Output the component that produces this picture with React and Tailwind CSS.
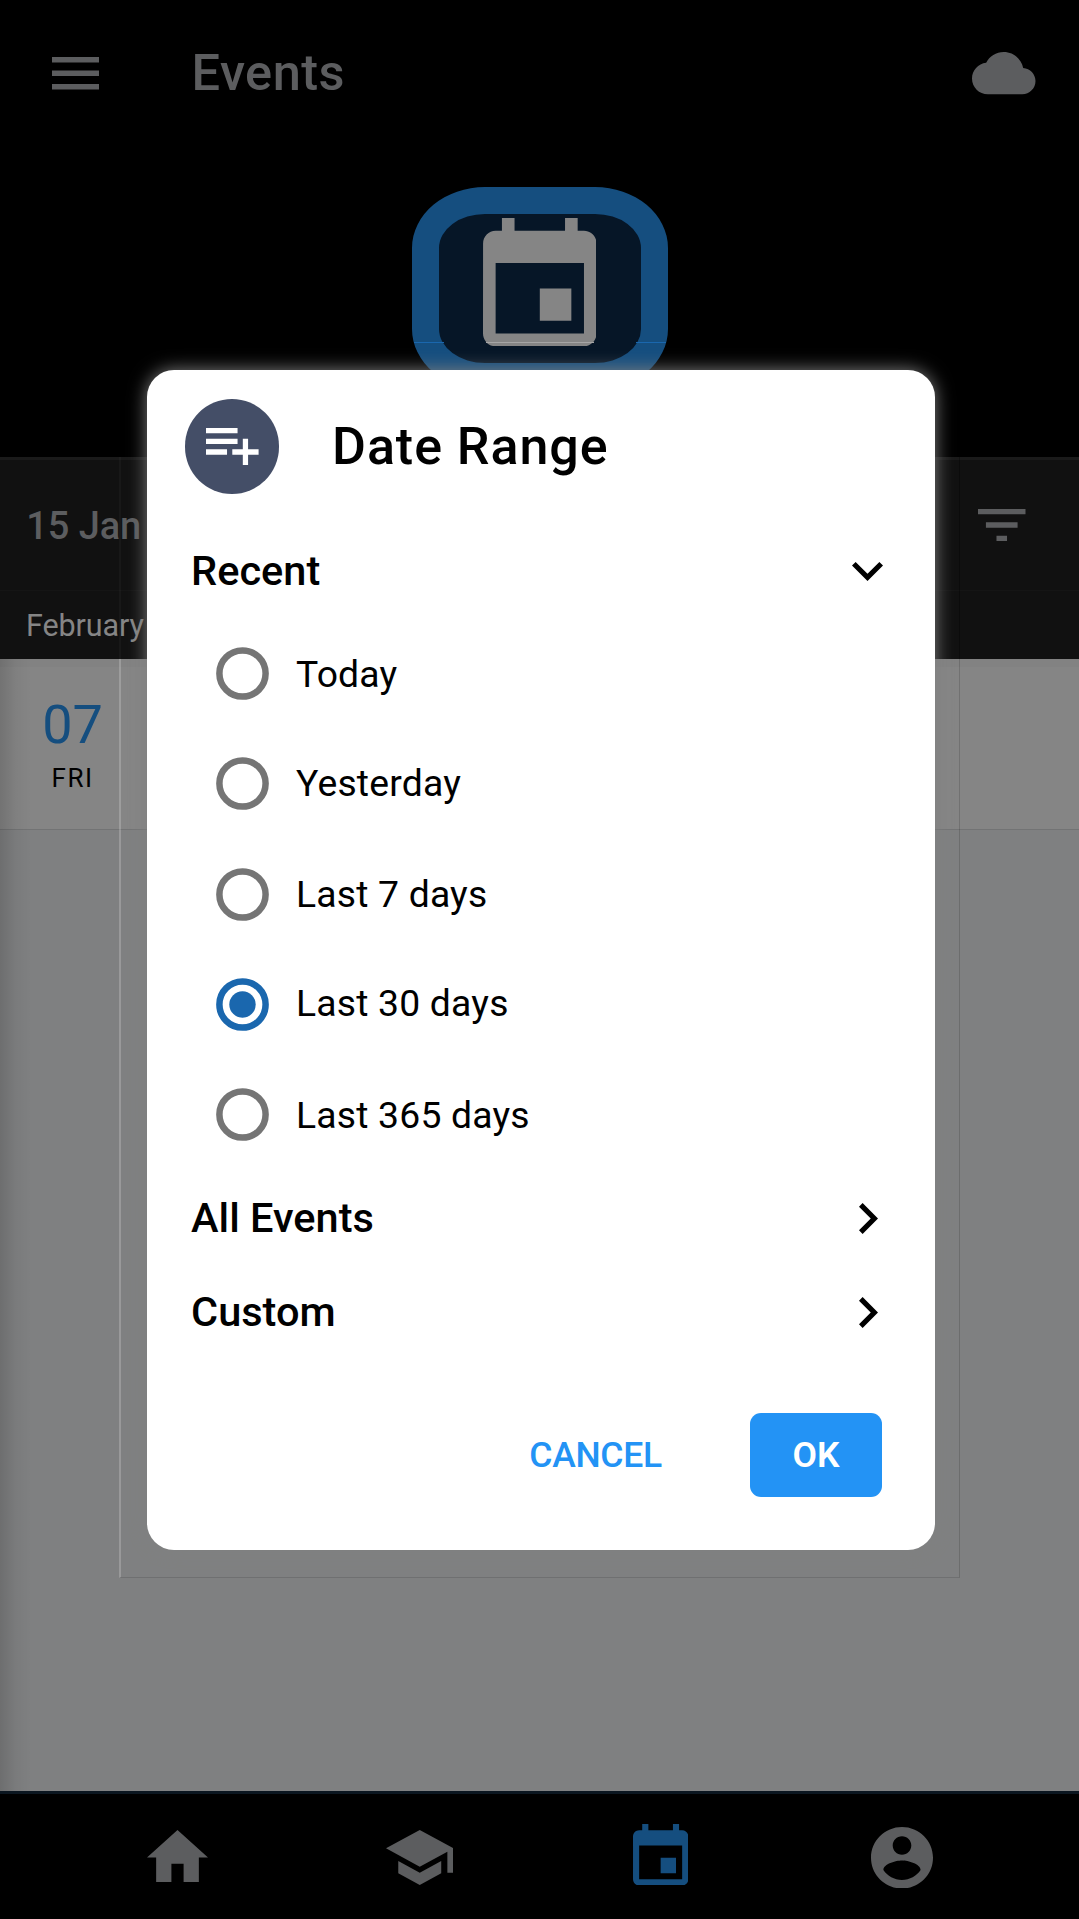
import React from "react";

function Shape({ box, d, className }) {
  return (
    <svg viewBox={box} preserveAspectRatio="none" fill="currentColor" className={className} aria-hidden="true">
      <path d={d} />
    </svg>
  );
}

const EVENT =
  "M17 12h-5v5h5v-5zM16 1v2H8V1H6v2H5c-1.11 0-1.99.9-1.99 2L3 19c0 1.1.89 2 2 2h14c1.1 0 2-.9 2-2V5c0-1.1-.9-2-2-2h-1V1h-2zm3 18H5V8h14v11z";
const MENU = "M3 18h18v-2H3v2zm0-5h18v-2H3v2zm0-7v2h18V6H3z";
const CLOUD =
  "M19.35 10.04C18.67 6.59 15.64 4 12 4 9.11 4 6.6 5.64 5.35 8.04 2.34 8.36 0 10.91 0 14c0 3.31 2.69 6 6 6h13c2.76 0 5-2.24 5-5 0-2.64-2.05-4.78-4.65-4.96z";
const FILTER = "M10 18h4v-2h-4v2zM3 6v2h18V6H3zm3 7h12v-2H6v2z";
const PLAYLIST_ADD = "M14 10H2v2h12v-2zm0-4H2v2h12V6zm4 8v-4h-2v4h-4v2h4v4h2v-4h4v-2h-4zM2 16h8v-2H2v2z";
const DOWN = "M7.41 8.59L12 13.17l4.59-4.58L18 10l-6 6-6-6 1.41-1.41z";
const RIGHT = "M8.59 16.59L13.17 12 8.59 7.41 10 6l6 6-6 6-1.41-1.41z";
const HOME = "M10 20v-6h4v6h5v-8h3L12 3 2 12h3v8z";
const SCHOOL = "M5 13.18v4L12 21l7-3.82v-4L12 17l-7-3.82zM12 3L1 9l11 6 9-4.91V17h2V9L12 3z";
const ACCOUNT =
  "M12 2C6.48 2 2 6.48 2 12s4.48 10 10 10 10-4.48 10-10S17.52 2 12 2zm0 3c1.66 0 3 1.34 3 3s-1.34 3-3 3-3-1.34-3-3 1.34-3 3-3zm0 14.2c-2.5 0-4.71-1.28-6-3.22.03-1.99 4-3.08 6-3.08 1.99 0 5.97 1.09 6 3.08-1.29 1.94-3.5 3.22-6 3.22z";

function Radio({ checked }) {
  return (
    <svg
      viewBox="0 0 53 53"
      className={"size-[53px] shrink-0 " + (checked ? "text-[#1a67ae]" : "text-[#757575]")}
      aria-hidden="true"
    >
      <circle cx="26.5" cy="26.5" r="23.1" fill="none" stroke="currentColor" strokeWidth="6.5" />
      {checked && <circle cx="26.5" cy="26.5" r="13.2" fill="currentColor" />}
    </svg>
  );
}

const OPTIONS = [
  { label: "Today", shift: "pt-[1px]" },
  { label: "Yesterday", shift: "pb-[1px]" },
  { label: "Last 7 days", shift: "" },
  { label: "Last 30 days", shift: "pb-[2px]", checked: true },
  { label: "Last 365 days", shift: "pt-[2px]" },
];

function SectionRow({ title, open }) {
  return (
    <div className="flex h-[94px] items-center justify-between pl-[44.3px]">
      <h3 className="pb-[1px] text-[41.5px] leading-none font-medium">{title}</h3>
      {open ? (
        <Shape box="6 8.59 12 7.41" d={DOWN} className="mr-[51.5px] h-[19px] w-[31px]" />
      ) : (
        <Shape box="8.59 6 7.41 12" d={RIGHT} className="mr-[56.5px] h-[31px] w-[19px]" />
      )}
    </div>
  );
}

function DateRangeDialog() {
  return (
    <div className="absolute top-[369.5px] left-[146.8px] flex h-[1180px] w-[788px] flex-col rounded-[27px] bg-white pt-[29.2px] text-black shadow-[0_0_18px_0px_#808080]">
      <div className="flex h-[95px] items-center pl-[38px]">
        <span className="flex size-[94.7px] items-center justify-center rounded-full bg-[#444e67] pl-[1px] text-white">
          <Shape box="2 6 20 14" d={PLAYLIST_ADD} className="h-[37.3px] w-[52.6px]" />
        </span>
        <h2 className="ml-[52.5px] pt-[1px] text-[52px] leading-none font-medium tracking-[0.95px]">Date Range</h2>
      </div>
      <div className="mt-[31px]">
        <SectionRow title="Recent" open />
        {OPTIONS.map((o) => (
          <div key={o.label} className="flex h-[110.2px] items-center pl-[69.2px]">
            <Radio checked={o.checked} />
            <span className={"ml-[27px] text-[37.3px] leading-none tracking-[0.2px] " + o.shift}>{o.label}</span>
          </div>
        ))}
        <div className="pt-[2px]">
          <SectionRow title="All Events" />
          <SectionRow title="Custom" />
        </div>
      </div>
      <div className="mt-[53.6px] mr-[52.7px] flex items-center justify-end text-[35.5px] leading-none font-medium">
        <button className="mr-[88px] pt-[2px] tracking-[-0.3px] text-[#2393f5]">CANCEL</button>
        <button className="h-[84px] w-[132.3px] rounded-[11px] bg-[#2393f5] pt-[2px] font-semibold text-white">OK</button>
      </div>
    </div>
  );
}

export default function App() {
  return (
    <div
      className="relative flex h-[1919px] w-[1079px] flex-col overflow-hidden bg-black"
      style={{ fontFamily: 'Roboto, "Liberation Sans", sans-serif' }}
    >
      <header className="flex h-[147px] items-center pl-[52px] text-[#5c5d5f]">
        <Shape box="3 6 18 12" d={MENU} className="h-[32.5px] w-[47px]" />
        <h1 className="ml-[92.5px] pb-[1px] text-[50.5px] leading-none font-medium tracking-[0.5px]">Events</h1>
        <Shape box="0 4 24 16" d={CLOUD} className="mr-[43.5px] ml-auto h-[42.3px] w-[63.5px]" />
      </header>

      <section className="flex h-[310px] justify-center pt-[40px]">
        <div className="relative flex h-[203px] w-[256px] justify-center rounded-[73px/61px] border-[27px] border-[#154e7f] bg-[#061627] pt-[4px]">
          <Shape box="3 1 18 20" d={EVENT} className="h-[128.3px] w-[113.6px] text-[#858585]" />
          <div className="absolute top-[128px] -left-[25px] flex h-px w-[252px] justify-between">
            <span className="w-[30px] bg-[#1a67ae]" />
            <span className="w-[108px] bg-[#a5a5a5]" />
            <span className="w-[30px] bg-[#1a67ae]" />
          </div>
        </div>
      </section>

      <section className="h-[202px] border-t-[3px] border-[#1a1a1a] bg-[#111111]">
        <div className="flex h-[131px] items-center justify-between border-b border-[#151515] pr-[53.5px] pl-[26.3px] text-[#5c5d5f]">
          <span className="pt-[1px] text-[38px] leading-none font-medium tracking-[-0.1px]">15 Jan</span>
          <Shape box="3 6 18 12" d={FILTER} className="h-[32px] w-[47.5px]" />
        </div>
        <div className="flex h-[68px] items-center pt-[2px] pl-[26px] text-[30.5px] leading-none tracking-[-0.1px] text-[#858585]">
          February
        </div>
      </section>

      <section className="flex h-[171px] flex-col border-t-[8px] border-b border-t-[#828282] border-b-[#727374] bg-[#858585]">
        <div className="w-[145px] pt-[31px] text-center">
          <div className="text-[54px] leading-none text-[#154e7f]">07</div>
          <div className="mt-[13px] text-[26px] leading-none tracking-[1.5px] text-black">FRI</div>
        </div>
      </section>

      <main className="grow bg-[#7f8081]" />

      <nav className="flex h-[128px] shrink-0 items-start border-t-[3px] border-[#0b1620] text-[#5c5d5f]">
        <Shape box="2 3 20 17" d={HOME} className="mt-[36px] ml-[147px] h-[52px] w-[61px]" />
        <Shape box="1 3 22 18" d={SCHOOL} className="mt-[36px] ml-[177.5px] h-[55px] w-[67.5px]" />
        <Shape box="3 1 18 20" d={EVENT} className="mt-[29.5px] ml-[180px] h-[61.5px] w-[55.3px] text-[#154e7f]" />
        <Shape box="2 2 20 20" d={ACCOUNT} className="mt-[32.5px] ml-[182.5px] h-[61.5px] w-[62px]" />
      </nav>

      <div className="absolute top-[659px] left-0 h-[1132px] w-[32px] bg-linear-to-r from-black/14 via-black/4 to-transparent" />
      <div className="absolute top-[457px] left-[119px] h-[202px] w-[841px] border-l-2 border-l-white/3 border-r border-r-black/30" />
      <div className="absolute top-[659px] left-[119px] h-[919px] w-[841px] border-r border-b border-l-2 border-r-black/15 border-b-black/12 border-l-white/20" />

      <DateRangeDialog />
    </div>
  );
}
